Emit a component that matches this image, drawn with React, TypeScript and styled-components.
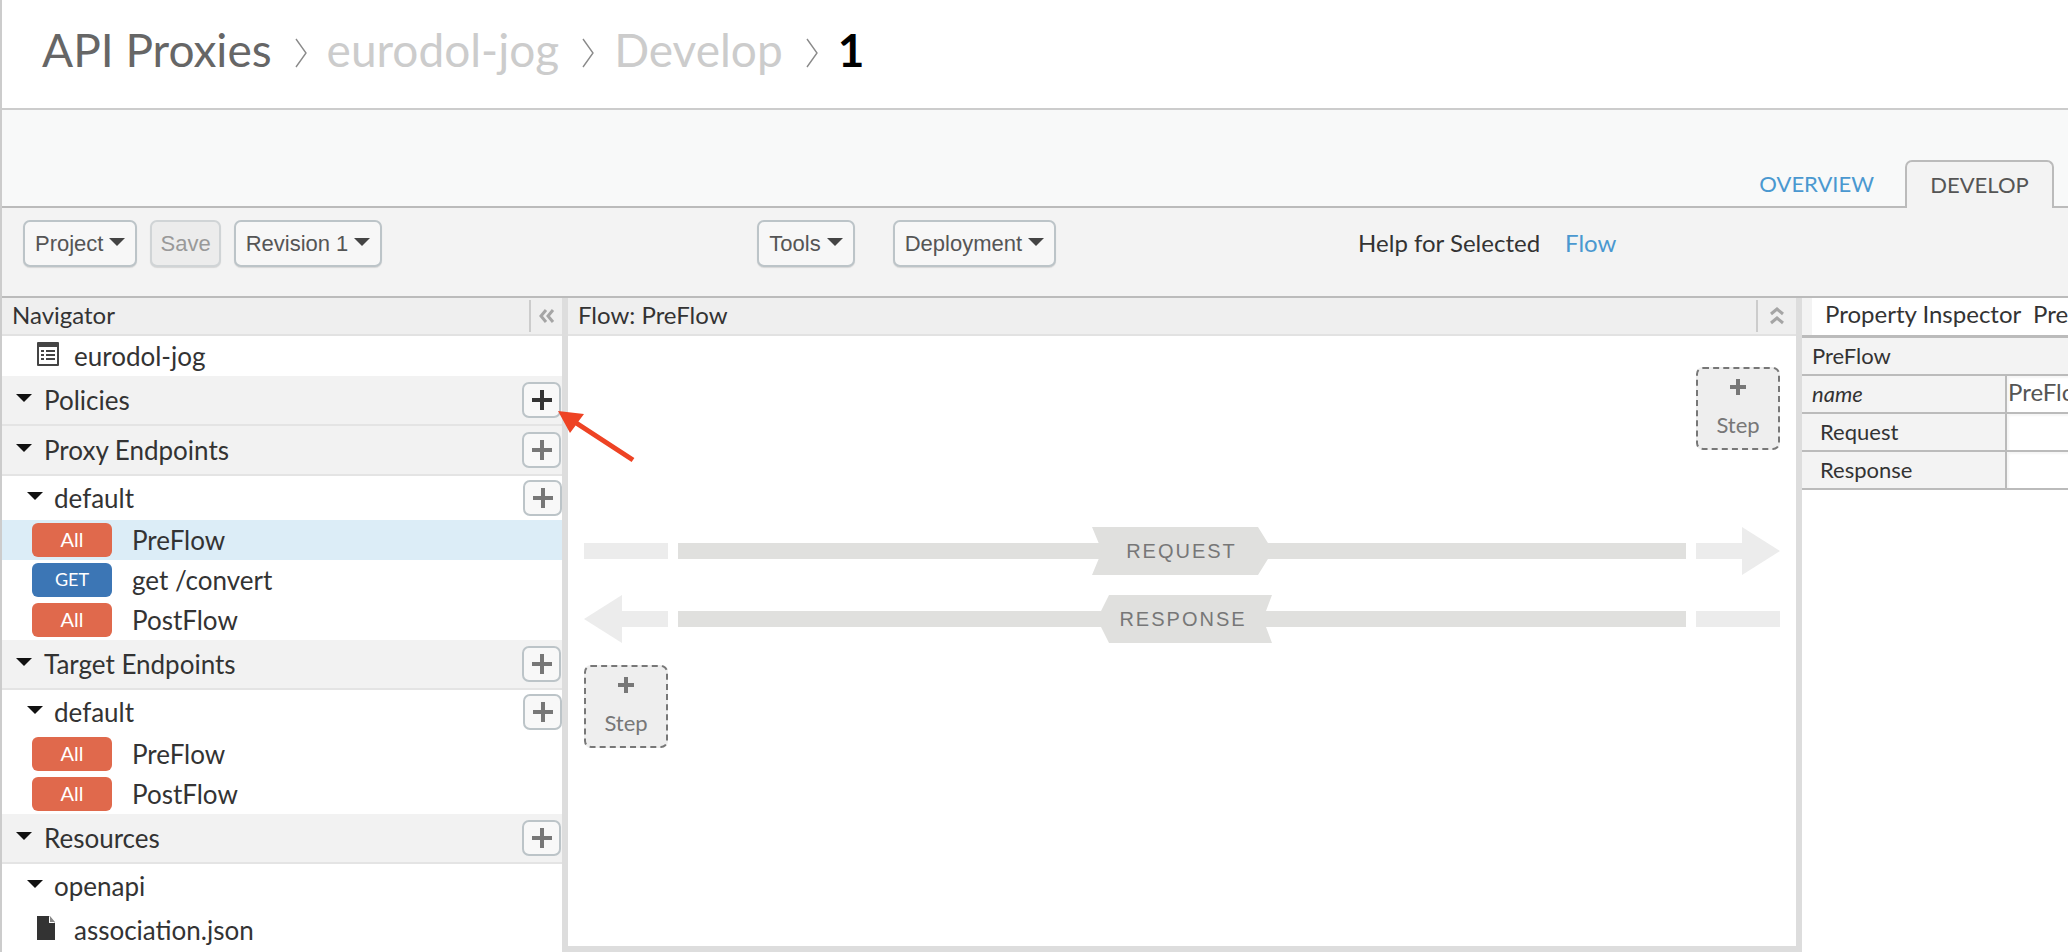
import React from "react";
import styled, { createGlobalStyle } from "styled-components";

const Global = createGlobalStyle`
  html, body { margin: 0; padding: 0; background: #fff; overflow: hidden; }
  * { box-sizing: border-box; }
`;

const Page = styled.div`
  position: relative;
  width: 2068px;
  height: 952px;
  overflow: hidden;
  border-left: 2px solid #ccc;
  font-family: Lato, "Open Sans", sans-serif;
  color: #333;
  display: flex;
  flex-direction: column;
`;

const Header = styled.header`
  height: 110px;
  border-bottom: 2px solid #ccc;
  display: flex;
  align-items: center;
  padding: 0 0 8px 40px;
`;
const Crumb = styled.span<{ $tone: string; $bold?: boolean }>`
  font-size: 46px;
  line-height: 60px;
  color: ${(p) => p.$tone};
  font-weight: ${(p) => (p.$bold ? 700 : 400)};
`;
const CrumbSep = styled.svg`
  width: 14px;
  height: 30px;
  margin: 6px 19px 0 22px;
  flex: none;
`;

const TabBar = styled.div`
  height: 98px;
  background: #f8f9f9;
  border-bottom: 2px solid #bbb;
  display: flex;
  align-items: flex-end;
  justify-content: flex-end;
  padding-right: 14px;
`;
const LinkTab = styled.div`
  font-size: 22px;
  line-height: 48px;
  height: 46px;
  color: #4a98d0;
  margin-right: 31px;
`;
const ActiveTab = styled.div`
  width: 149px;
  height: 48px;
  margin-bottom: -2px;
  background: #f3f3f3;
  border: 2px solid #bbb;
  border-bottom: none;
  border-radius: 7px 7px 0 0;
  font-size: 22px;
  line-height: 46px;
  text-align: center;
  color: #555;
`;

const Toolbar = styled.div`
  height: 90px;
  background: #f3f3f3;
  border-bottom: 2px solid #bbb;
  display: flex;
  align-items: flex-start;
  padding: 12px 0 0 21px;
`;
const Button = styled.div<{ $gap?: number; $disabled?: boolean }>`
  height: 47px;
  margin-left: ${(p) => p.$gap ?? 0}px;
  padding: 0 ${(p) => (p.$disabled ? 8 : 10)}px;
  display: flex;
  align-items: center;
  gap: 6px;
  font-family: "Liberation Sans", Arial, sans-serif;
  font-size: 22px;
  color: ${(p) => (p.$disabled ? "#999" : "#555")};
  background: ${(p) => (p.$disabled ? "#ececec" : "#f7f7f7")};
  border: 2px solid ${(p) => (p.$disabled ? "#d0d4d6" : "#bcc4c8")};
  border-radius: 7px;
  box-shadow: 0 1px 1px rgba(0, 0, 0, 0.12);
`;
const Caret = styled.i`
  width: 0;
  height: 0;
  margin-top: -3px;
  border-left: 8px solid transparent;
  border-right: 8px solid transparent;
  border-top: 8px solid #444;
`;
const Help = styled.div`
  margin-left: 302px;
  height: 45px;
  display: flex;
  align-items: center;
  gap: 25px;
  font-size: 24px;
  color: #333;
`;
const Link = styled.span`
  color: #4a98d0;
`;

const Workspace = styled.div`
  flex: 1;
  display: flex;
  min-height: 0;
`;
const Navigator = styled.aside`
  width: 560px;
  flex: none;
  display: flex;
  flex-direction: column;
  overflow: hidden;
`;
const PaneHead = styled.div`
  height: 38px;
  flex: none;
  background: #efefef;
  border-bottom: 2px solid #e2e2e2;
  display: flex;
  align-items: center;
  font-size: 24px;
  padding-left: 10px;
  color: #333;
`;
const PaneTitle = styled.span`
  flex: 1;
  margin-top: -4px;
`;
const PaneToggle = styled.div<{ $width: number }>`
  width: ${(p) => p.$width}px;
  height: 32px;
  border-left: 2px solid #ccc;
  display: flex;
  align-items: center;
  justify-content: center;
`;

const Row = styled.div<{ $h: number; $pad: number; $active?: boolean }>`
  height: ${(p) => p.$h}px;
  flex: none;
  display: flex;
  align-items: center;
  padding-left: ${(p) => p.$pad}px;
  font-size: 26px;
  color: #333;
  background: ${(p) => (p.$active ? "#dcedf7" : "transparent")};
`;
const Section = styled.div`
  height: 50px;
  flex: none;
  display: flex;
  align-items: center;
  padding: 0 1px 0 14px;
  font-size: 26px;
  color: #333;
  background: #f2f2f2;
  border-bottom: 2px solid #e4e4e4;
`;
const Tri = styled.i<{ $gap: number }>`
  width: 0;
  height: 0;
  flex: none;
  margin: -4px ${(p) => p.$gap}px 0 0;
  border-left: 8px solid transparent;
  border-right: 8px solid transparent;
  border-top: 8px solid #111;
`;
const Grow = styled.span`
  flex: 1;
  margin-top: -1px;
`;
const Label = styled.span`
  margin-top: -1px;
`;
const Plus = styled.div<{ $dark?: boolean }>`
  width: 39px;
  height: 36px;
  flex: none;
  display: flex;
  align-items: center;
  justify-content: center;
  background: #f8f8f8;
  border: 2px solid #bcc4c8;
  border-radius: 7px;
  color: ${(p) => (p.$dark ? "#333" : "#777")};
`;
const Badge = styled.span<{ $get?: boolean }>`
  width: 80px;
  height: 34px;
  flex: none;
  margin-right: 20px;
  padding-bottom: 2px;
  border-radius: 6px;
  display: flex;
  align-items: center;
  justify-content: center;
  font-size: ${(p) => (p.$get ? 18 : 20)}px;
  color: #fff;
  background: ${(p) => (p.$get ? "#3c76b5" : "#e0694c")};
`;
const TreeIcon = styled.svg`
  width: 24px;
  height: 26px;
  flex: none;
  margin-right: 14px;
  margin-top: -4px;
`;

const Gutter = styled.div`
  width: 6px;
  flex: none;
  background: #ddd;
`;

const Center = styled.main`
  width: 1228px;
  flex: none;
  display: flex;
  flex-direction: column;
`;
const Canvas = styled.div`
  flex: 1;
  display: flex;
  flex-direction: column;
  padding: 31px 16px 0;
  border-bottom: 6px solid #ddd;
`;
const StepBox = styled.div<{ $end?: boolean; $top?: number }>`
  width: 84px;
  height: 83px;
  margin-top: ${(p) => p.$top ?? 0}px;
  align-self: ${(p) => (p.$end ? "flex-end" : "flex-start")};
  background: #eee;
  border: 2px dashed #777;
  border-radius: 7px;
  display: flex;
  flex-direction: column;
  align-items: center;
  color: #777;
  font-size: 22px;
  line-height: 28px;
  padding-top: 9px;
  gap: 15px;
`;
const FlowRow = styled.div<{ $top: number }>`
  height: 48px;
  margin-top: ${(p) => p.$top}px;
  display: flex;
  align-items: center;
`;
const EndArrow = styled.svg<{ $gap?: number }>`
  flex: none;
  margin-left: ${(p) => p.$gap ?? 0}px;
`;
const Line = styled.div<{ $w?: number; $before?: number; $after?: number }>`
  height: 16px;
  background: #e0e0de;
  flex: ${(p) => (p.$w ? `0 0 ${p.$w}px` : "1")};
  margin-left: ${(p) => p.$before ?? 0}px;
  margin-right: ${(p) => p.$after ?? 0}px;
`;
const Ribbon = styled.div<{ $w: number; $shape: string; $nudge?: number }>`
  width: ${(p) => p.$w}px;
  height: 48px;
  flex: none;
  position: relative;
  background: #e0e0de;
  clip-path: polygon(${(p) => p.$shape});
  display: flex;
  align-items: center;
  justify-content: center;
  padding-right: ${(p) => p.$nudge ?? 0}px;
  font-family: "Liberation Sans", Arial, sans-serif;
  font-size: 20px;
  letter-spacing: 2px;
  color: #777;
`;

const Inspector = styled.section`
  flex: 1;
  min-width: 0;
  display: flex;
  flex-direction: column;
  overflow: hidden;
`;
const InspectorHead = styled.div`
  height: 40px;
  flex: none;
  background: #f3f3f3;
  border-bottom: 3px solid #bbb;
  padding-left: 10px;
  display: flex;
`;
const InspectorTitle = styled.div`
  flex: 1;
  height: 37px;
  background: #fff;
  padding-left: 13px;
  font-size: 24px;
  line-height: 32px;
  color: #333;
  white-space: nowrap;
  overflow: hidden;
`;
const PropTitle = styled.div`
  height: 38px;
  flex: none;
  background: #f3f3f3;
  border-bottom: 2px solid #bbb;
  padding-left: 10px;
  font-size: 22px;
  line-height: 36px;
  color: #333;
`;
const PropRow = styled.div`
  height: 38px;
  flex: none;
  display: flex;
  border-bottom: 2px solid #bbb;
`;
const PropKey = styled.div<{ $italic?: boolean; $indent: number }>`
  width: 205px;
  flex: none;
  background: #f3f3f3;
  border-right: 2px solid #bbb;
  padding-left: ${(p) => p.$indent}px;
  font-size: 22px;
  line-height: 36px;
  font-style: ${(p) => (p.$italic ? "italic" : "normal")};
  color: #333;
`;
const PropValue = styled.div`
  flex: 1;
  padding-left: 1px;
  font-size: 24px;
  line-height: 32px;
  color: #555;
  white-space: nowrap;
  overflow: hidden;
  background: #fff;
  box-shadow: inset 2px 2px 2px rgba(0, 0, 0, 0.04);
`;

const Pointer = styled.svg`
  position: absolute;
  left: 548px;
  top: 404px;
  pointer-events: none;
`;

const PlusGlyph = () => (
  <svg width="22" height="22" viewBox="0 0 22 22" aria-hidden="true">
    <path d="M9 1h4v8h8v4h-8v8H9v-8H1V9h8z" fill="currentColor" />
  </svg>
);
const SmallPlus = () => (
  <svg width="18" height="18" viewBox="0 0 18 18" aria-hidden="true">
    <path d="M7 1h4v6h6v4h-6v6H7v-6H1V7h6z" fill="currentColor" />
  </svg>
);
const Chevron = () => (
  <CrumbSep viewBox="0 0 14 30" aria-hidden="true">
    <path d="M2 1l10 14L2 29" fill="none" stroke="#8a8a8a" strokeWidth="1.4" />
  </CrumbSep>
);
const ItemRow = ({ tag, label, active }: { tag: string; label: string; active?: boolean }) => (
  <Row $h={40} $pad={30} $active={active}>
    <Badge $get={tag === "GET"}>{tag}</Badge>
    <Label>{label}</Label>
  </Row>
);
const SectionRow = ({ label, dark }: { label: string; dark?: boolean }) => (
  <Section>
    <Tri $gap={12} />
    <Grow>{label}</Grow>
    <Plus $dark={dark}>
      <PlusGlyph />
    </Plus>
  </Section>
);
const SubRow = ({ label, add }: { label: string; add?: boolean }) => (
  <Row $h={44} $pad={25}>
    <Tri $gap={11} />
    <Grow>{label}</Grow>
    {add && (
      <Plus>
        <PlusGlyph />
      </Plus>
    )}
  </Row>
);

export default function App() {
  return (
    <Page>
      <Global />
      <Header>
        <Crumb $tone="#666">API Proxies</Crumb>
        <Chevron />
        <Crumb $tone="#ccc">eurodol-jog</Crumb>
        <Chevron />
        <Crumb $tone="#ccc">Develop</Crumb>
        <Chevron />
        <Crumb $tone="#000" $bold>
          1
        </Crumb>
      </Header>
      <TabBar>
        <LinkTab>OVERVIEW</LinkTab>
        <ActiveTab>DEVELOP</ActiveTab>
      </TabBar>
      <Toolbar>
        <Button>
          Project
          <Caret />
        </Button>
        <Button $gap={13} $disabled>
          Save
        </Button>
        <Button $gap={13}>
          Revision 1
          <Caret />
        </Button>
        <Button $gap={375}>
          Tools
          <Caret />
        </Button>
        <Button $gap={38}>
          Deployment
          <Caret />
        </Button>
        <Help>
          <span>Help for Selected</span>
          <Link>Flow</Link>
        </Help>
      </Toolbar>
      <Workspace>
        <Navigator>
          <PaneHead>
            <PaneTitle>Navigator</PaneTitle>
            <PaneToggle $width={33}>
              <svg width="18" height="14" viewBox="0 0 18 14" aria-hidden="true">
                <path d="M8 1L3 7l5 6M15 1l-5 6 5 6" fill="none" stroke="#a5a5a5" strokeWidth="3" />
              </svg>
            </PaneToggle>
          </PaneHead>
          <Row $h={40} $pad={34}>
            <TreeIcon viewBox="0 0 24 26" aria-hidden="true">
              <rect x="1" y="1" width="22" height="24" rx="1" fill="#444" />
              <rect x="3" y="6" width="18" height="17" fill="#fff" />
              <path d="M5 9h3v2H5zM10 9h9v2h-9zM5 13h3v2H5zM10 13h9v2h-9zM5 17h3v2H5zM10 17h9v2h-9z" fill="#444" />
            </TreeIcon>
            <Label>eurodol-jog</Label>
          </Row>
          <SectionRow label="Policies" dark />
          <SectionRow label="Proxy Endpoints" />
          <SubRow label="default" add />
          <ItemRow tag="All" label="PreFlow" active />
          <ItemRow tag="GET" label="get /convert" />
          <ItemRow tag="All" label="PostFlow" />
          <SectionRow label="Target Endpoints" />
          <SubRow label="default" add />
          <ItemRow tag="All" label="PreFlow" />
          <ItemRow tag="All" label="PostFlow" />
          <SectionRow label="Resources" />
          <SubRow label="openapi" />
          <Row $h={44} $pad={34}>
            <TreeIcon viewBox="0 0 24 26" aria-hidden="true">
              <path d="M1 1h12l6 7v17H1z" fill="#333" />
              <path d="M13 1v7h6z" fill="#fff" />
              <path d="M14 1l5 6h-5z" fill="#888" />
            </TreeIcon>
            <Label>association.json</Label>
          </Row>
        </Navigator>
        <Gutter />
        <Center>
          <PaneHead>
            <PaneTitle>Flow: PreFlow</PaneTitle>
            <PaneToggle $width={40}>
              <svg width="14" height="18" viewBox="0 0 14 18" aria-hidden="true">
                <path d="M1 7l6-5 6 5M1 16l6-5 6 5" fill="none" stroke="#a5a5a5" strokeWidth="3" />
              </svg>
            </PaneToggle>
          </PaneHead>
          <Canvas>
            <StepBox $end>
              <SmallPlus />
              <span>Step</span>
            </StepBox>
            <FlowRow $top={77}>
              <svg width="84" height="16" viewBox="0 0 84 16" aria-hidden="true">
                <rect width="84" height="16" fill="#ececec" />
              </svg>
              <Line $w={424} $before={10} $after={-10} />
              <Ribbon $w={181} $shape="0 0, 166px 0, 181px 24px, 166px 48px, 0 48px, 10px 24px" $nudge={2}>
                REQUEST
              </Ribbon>
              <Line $before={-6} />
              <EndArrow $gap={10} width="84" height="48" viewBox="0 0 84 48" aria-hidden="true">
                <path d="M0 16h46V0l38 24-38 24V32H0z" fill="#ececec" />
              </EndArrow>
            </FlowRow>
            <FlowRow $top={20}>
              <svg width="84" height="48" viewBox="0 0 84 48" aria-hidden="true">
                <path d="M84 16H38V0L0 24l38 24V32h46z" fill="#ececec" />
              </svg>
              <Line $w={423} $before={10} $after={-4} />
              <Ribbon $w={175} $shape="12px 0, 175px 0, 166px 24px, 175px 48px, 12px 48px, 0 24px" $nudge={3}>
                RESPONSE
              </Ribbon>
              <Line $before={-9} />
              <EndArrow $gap={10} width="84" height="16" viewBox="0 0 84 16" aria-hidden="true">
                <rect width="84" height="16" fill="#ececec" />
              </EndArrow>
            </FlowRow>
            <StepBox $top={22}>
              <SmallPlus />
              <span>Step</span>
            </StepBox>
          </Canvas>
        </Center>
        <Gutter />
        <Inspector>
          <InspectorHead>
            <InspectorTitle>Property Inspector&nbsp;&nbsp;PreFlow</InspectorTitle>
          </InspectorHead>
          <PropTitle>PreFlow</PropTitle>
          <PropRow>
            <PropKey $italic $indent={10}>
              name
            </PropKey>
            <PropValue>PreFlow</PropValue>
          </PropRow>
          <PropRow>
            <PropKey $indent={18}>Request</PropKey>
            <PropValue />
          </PropRow>
          <PropRow>
            <PropKey $indent={18}>Response</PropKey>
            <PropValue />
          </PropRow>
        </Inspector>
      </Workspace>
      <Pointer width="90" height="62" viewBox="0 0 90 62" aria-hidden="true">
        <path d="M8 7L34 10L28.4 17.4L84.4 53.9L81.6 58.1L25.6 21.6L20 29Z" fill="#ee4324" />
      </Pointer>
    </Page>
  );
}
